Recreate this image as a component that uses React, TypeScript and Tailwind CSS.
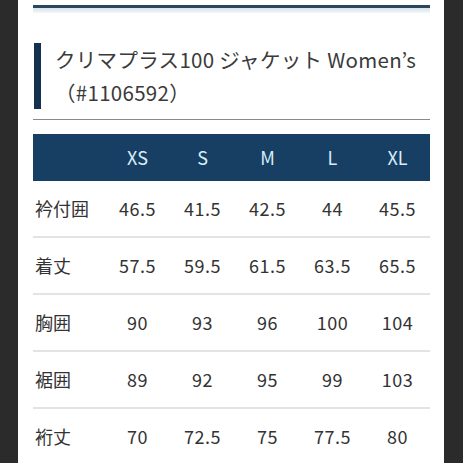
const sizes = ["XS", "S", "M", "L", "XL"];

const rows: [string, string[]][] = [
  ["衿付囲", ["46.5", "41.5", "42.5", "44", "45.5"]],
  ["着丈", ["57.5", "59.5", "61.5", "63.5", "65.5"]],
  ["胸囲", ["90", "93", "96", "100", "104"]],
  ["裾囲", ["89", "92", "95", "99", "103"]],
  ["裄丈", ["70", "72.5", "75", "77.5", "80"]],
];

export default function App() {
  return (
    <div
      className="w-[463px] h-[463px] overflow-hidden bg-[#2b2b2b] flex"
      style={{ fontFamily: '"Noto Sans CJK JP", "Noto Sans", sans-serif' }}
    >
      <div className="ml-[18px] w-[426px] h-full bg-white pl-[15px] pr-[14px] pt-[5px] text-[#333]">
        {/* top rule */}
        <div className="h-[3px] bg-[#2c465c]" />
        <div className="h-[5px] bg-gradient-to-b from-[#d6e3ee] to-[#f4f8fb]" />

        {/* title */}
        <div className="mt-[30px] flex">
          <div className="ml-px w-[7px] bg-[#143250]" />
          <div className="pl-[14px] text-[20.5px] leading-[33px] tracking-[0.3px] text-[#3a3a3a]">
            <div>クリマプラス100 ジャケット Women’s</div>
            <div>（#1106592）</div>
          </div>
        </div>
        <div className="mt-[10px] h-px bg-[#8a8a8a]" />

        {/* size table */}
        <div className="mt-[14px]">
          <div className="grid grid-cols-[72px_repeat(5,1fr)] h-[47px] items-center bg-[#173f63] text-[18px] text-[#d9ecf8]">
            <div />
            {sizes.map((s) => (
              <div key={s} className="text-center">
                {s}
              </div>
            ))}
          </div>
          {rows.map(([label, vals]) => (
            <div
              key={label}
              className="grid grid-cols-[72px_repeat(5,1fr)] h-[57px] items-center border-b-2 border-[#e3e3e3] text-[18px]"
            >
              <div className="pl-[2px]">{label}</div>
              {vals.map((v, i) => (
                <div key={i} className="text-center tracking-[0.5px]">
                  {v}
                </div>
              ))}
            </div>
          ))}
        </div>
      </div>
    </div>
  );
}
